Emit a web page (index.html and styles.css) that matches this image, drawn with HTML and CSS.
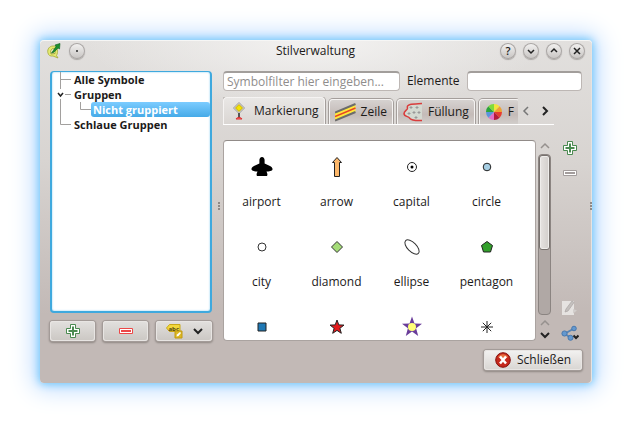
FILE: index.html
```html
<!DOCTYPE html>
<html lang="de">
<head>
<meta charset="utf-8">
<title>Stilverwaltung</title>
<link rel="stylesheet" href="styles.css">
</head>
<body>
<main class="window">
  <header class="titlebar">
    <div class="window-controls">
      <svg class="app-icon" width="16" height="16" viewBox="0 0 16 16"><path d="M7 3C3.500 3 1.200 6 1.800 9.500c.5 3 2.700 4 5.200 3.500l5 2-1.500-2.500C12.500 9 11.500 4 8.500 3z" fill="#e4ea70" stroke="#a4a838" stroke-width=".8"/><path d="M7 5.500C5 6 4.200 8.500 5 11l4-.5 0-4z" fill="#fafad0" stroke="#8f9428" stroke-width=".8"/><path d="M14 .5 9 2l1 1.500L5.500 10 8 9.200 12 5l1.500 1z" fill="#19902e" stroke="#0c5e1a" stroke-width=".6"/></svg>
      <button class="round" aria-label="Menü"><svg width="16" height="16" viewBox="0 0 16 16"><path d="M7 7h2v2H7z" fill="#555"/></svg></button>
    </div>
    <h1 class="title">Stilverwaltung</h1>
    <div class="window-controls end">
      <button class="round">?</button>
      <button class="round"><svg width="16" height="16" viewBox="0 0 16 16"><path class="stroke" d="m5 7 3 3 3-3"/></svg></button>
      <button class="round"><svg width="16" height="16" viewBox="0 0 16 16"><path class="stroke" d="m5 9 3-3 3 3"/></svg></button>
      <button class="round"><svg width="16" height="16" viewBox="0 0 16 16"><path class="stroke" d="m5 5 6 6m0-6-6 6"/></svg></button>
    </div>
  </header>

  <div class="content">
    <section class="groups">
      <ul class="tree">
        <li class="node"><svg width="20" height="15"><path class="branch" d="M8.500 0v15M8.500 7.500H19"/></svg><span class="node-label">Alle Symbole</span></li>
        <li class="node"><svg width="20" height="15"><path class="branch" d="M8.500 0v2M8.500 12v3M13 7.500h6"/><path class="stroke" d="m6 6 2.500 3L11 6"/></svg><span class="node-label">Gruppen</span></li>
        <li class="node"><svg width="39" height="15"><path class="branch" d="M8.500 0v15M28.500 0v7.500H39"/></svg><span class="node-label selected">Nicht gruppiert</span></li>
        <li class="node"><svg width="20" height="15"><path class="branch" d="M8.500 0v7.500H19"/></svg><span class="node-label">Schlaue Gruppen</span></li>
      </ul>
      <div class="group-actions">
        <button class="push"><svg width="14" height="14" viewBox="0 0 14 14"><path d="M4.500.5h5v4h4v5h-4v4h-5v-4h-4v-5h4z" fill="#fff" stroke="#4a8a50"/><path d="M7 2.500v9M2.500 7h9" stroke="#4a8a50" stroke-width="2"/></svg></button>
        <button class="push"><svg width="14" height="6" viewBox="0 0 14 6"><path d="M.5.5h13v5H.5z" fill="#fff" stroke="#ec4848"/><path d="M2 3h10" stroke="#ec4848" stroke-width="2"/></svg></button>
        <button class="push wide">
          <svg width="17" height="16" viewBox="0 0 17 16"><path d="M3.500 1.500h10.500v7H3.500l-3-3.500z" fill="#f2d83c" stroke="#c8a818"/><text class="abc" x="2.500" y="7.500">abc</text><path d="M9 8h7v7H9z" fill="#dcb824" stroke="#c29a10"/><path d="m10.500 13.500.5-2L14 9l1 1-2.500 3z" fill="#fff"/></svg>
          <svg width="10" height="8" viewBox="0 0 10 8"><path class="stroke bold" d="m1 2 4 4 4-4"/></svg>
        </button>
      </div>
    </section>

    <div class="splitter"></div>

    <section class="symbols">
      <div class="filters">
        <input class="field search" type="text" placeholder="Symbolfilter hier eingeben..." aria-label="Symbolfilter">
        <label for="tags">Elemente</label>
        <input class="field tags" id="tags" type="text">
      </div>

      <nav class="tabbar">
        <div class="tabs">
          <button class="tab active"><svg width="20" height="20" viewBox="0 0 20 20"><path d="M10 1.500 15.500 7 10 12.500 4.500 7z" fill="#ddd" stroke="#999"/><path d="m10 3.500 3.500 3.500-3.500 3.500L6.500 7z" fill="#f5e500" stroke="#c6a800"/><path d="M10 12v5" stroke="#555" stroke-width="2"/><path d="M7 18c1-2 5-2 6 0z" fill="#f77" stroke="#d92c2c"/></svg>Markierung</button>
          <button class="tab"><svg width="21" height="20" viewBox="0 0 21 20"><path d="M0 10.500 20.500 2v8L0 18.500z" fill="#ffe83c"/><path d="M0 10.500 20.500 2M0 18.500 20.500 10" stroke="#6c6c6c" stroke-width="2"/><path d="M0 14.500 20.500 6" stroke="#e84424" stroke-width="1.500"/></svg>Zeile</button>
          <button class="tab"><svg width="20" height="20" viewBox="0 0 20 20"><path d="M19 1.500C12 2 3 1.500 4.500 6c.3 2-4 3-3.500 6 .6 2.800 4 1.800 6 4.500C9 19 14 18.500 19 18.500" fill="#d4d9d1" stroke="#d93c3c" stroke-width="1.500"/><path d="M8 4v3M6.500 5.500h3M14 4v3m-1.500-1.500h3M6 10v3m-1.500-1.500h3M11 9v3m-1.500-1.500h3M16 9v3m-1.500-1.500h3M13 14v3m-1.500-1.500h3" stroke="#999"/></svg>Füllung</button>
          <button class="tab"><svg width="18" height="18" viewBox="-9 -9 18 18"><path d="M0 0V-8A8 8 0 0 1 5.700-5.700z" fill="#f2e43c"/><path d="M0 0 5.700-5.700A8 8 0 0 1 8 0z" fill="#f0a030"/><path d="M0 0H8A8 8 0 0 1 5.700 5.700z" fill="#e83c30"/><path d="M0 0 5.700 5.700A8 8 0 0 1 0 8z" fill="#b51a3c"/><path d="M0 0V8A8 8 0 0 1-5.700 5.700z" fill="#e070c8"/><path d="M0 0-5.700 5.700A8 8 0 0 1-8 0z" fill="#5a94dc"/><path d="M0 0H-8A8 8 0 0 1-5.700-5.700z" fill="#2ca43c"/><path d="M0 0-5.700-5.700A8 8 0 0 1 0-8z" fill="#80dc38"/></svg>F</button>
        </div>
        <div class="tab-scroll">
          <button class="flat"><svg width="8" height="10" viewBox="0 0 8 10"><path class="stroke faint" d="M6 1 2 5l4 4"/></svg></button>
          <button class="flat"><svg width="8" height="10" viewBox="0 0 8 10"><path class="stroke bold" d="m2 1 4 4-4 4"/></svg></button>
        </div>
      </nav>

      <div class="browser">
        <ul class="symbol-list">
          <li class="symbol"><svg width="24" height="24" viewBox="0 0 24 24"><path d="M12 2c1.600 0 2.600 1.500 2.600 3v3.500L20 11c2 1 2.600 2 2.500 3.500-.2 1.500-3.500 2-6 2 .5 1.500 1.500 2.500.5 4.500H7c-1-2 0-3 .5-4.500-2.500 0-5.800-.5-6-2C1.400 13 2 12 4 11l5.400-2.500V5C9.400 3.500 10.400 2 12 2z" fill="#000"/></svg>airport</li>
          <li class="symbol"><svg width="24" height="24" viewBox="0 0 24 24"><path d="m12 2.500 4.500 5h-2v14h-5v-14h-2z" fill="#fdb769" stroke="#222"/></svg>arrow</li>
          <li class="symbol"><svg width="24" height="24" viewBox="0 0 24 24"><circle cx="12" cy="12" r="4.500" fill="#fff" stroke="#222"/><circle cx="12" cy="12" r="1.500" fill="#000"/></svg>capital</li>
          <li class="symbol"><svg width="24" height="24" viewBox="0 0 24 24"><circle cx="12" cy="12" r="3.800" fill="#a6cee3" stroke="#222"/></svg>circle</li>
          <li class="symbol"><svg width="24" height="24" viewBox="0 0 24 24"><circle cx="12" cy="12" r="4" fill="#fff" stroke="#333"/></svg>city</li>
          <li class="symbol"><svg width="24" height="24" viewBox="0 0 24 24"><path d="m12 6.500 5.500 5.500-5.500 5.500L6.500 12z" fill="#a5dc78" stroke="#333"/></svg>diamond</li>
          <li class="symbol"><svg width="24" height="24" viewBox="0 0 24 24"><ellipse cx="12" cy="12" rx="9" ry="4.500" transform="rotate(45 12 12)" fill="#fff" stroke="#333"/></svg>ellipse</li>
          <li class="symbol"><svg width="24" height="24" viewBox="0 0 24 24"><path d="m12 6.500 5.500 4-2 6.500h-7l-2-6.500z" fill="#33a02c" stroke="#222"/></svg>pentagon</li>
          <li class="symbol"><svg width="24" height="24" viewBox="0 0 24 24"><path d="M8 8h8v8H8z" fill="#1f78b4" stroke="#222"/></svg></li>
          <li class="symbol"><svg width="24" height="24" viewBox="0 0 24 24"><path d="m12 5 1.800 4.900 5.200.2-4.100 3.200 1.400 5L12 15.400l-4.300 2.900 1.400-5L5 10.100l5.200-.2z" fill="#e31a1c" stroke="#222"/></svg></li>
          <li class="symbol"><svg width="24" height="24" viewBox="0 0 24 24"><path d="m12 1.500 2.500 7 7.500.3-5.900 4.500L18.200 21 12 16.500 5.800 21l2.100-7.700L2 8.800l7.500-.3z" fill="#6a3d9a"/><circle cx="12" cy="12" r="4" fill="#ffff78"/></svg></li>
          <li class="symbol"><svg width="24" height="24" viewBox="0 0 24 24"><path d="M12 6v12M6 12h12M7.800 7.800l8.400 8.400m0-8.400-8.400 8.400" stroke="#222"/></svg></li>
        </ul>
        <div class="scrollbar">
          <button class="flat"><svg width="10" height="8" viewBox="0 0 10 8"><path class="stroke gray" d="m1 6 4-4 4 4"/></svg></button>
          <div class="track"><div class="thumb"></div></div>
          <button class="flat"><svg width="10" height="8" viewBox="0 0 10 8"><path class="stroke gray" d="m1 6 4-4 4 4"/></svg></button>
          <button class="flat"><svg width="10" height="8" viewBox="0 0 10 8"><path class="stroke bold" d="m1 2 4 4 4-4"/></svg></button>
        </div>
        <div class="tools">
          <button class="flat"><svg width="14" height="14" viewBox="0 0 14 14"><path d="M4.500.5h5v4h4v5h-4v4h-5v-4h-4v-5h4z" fill="#fff" stroke="#4a8a50"/><path d="M7 2.500v9M2.500 7h9" stroke="#4a8a50" stroke-width="2"/></svg></button>
          <button class="flat"><svg width="14" height="6" viewBox="0 0 14 6"><path d="M.5.5h13v5H.5z" fill="#fff" stroke="#a39d9c"/><path d="M2 3h10" stroke="#a39d9c" stroke-width="2"/></svg></button>
          <button class="flat push-down"><svg width="18" height="16" viewBox="0 0 18 16"><path d="M1 1h12v14H1z" fill="#e6e3e1"/><path d="m4 12 1-3 6-8 2 1.500L7 11z" fill="#c4c0be" stroke="#aaa5a3" stroke-width=".7"/><path d="m12 9 4 1.500-4 3z" fill="#d2cecc"/></svg></button>
          <button class="flat"><svg width="18" height="16" viewBox="0 0 18 16"><path d="m4 8.500 9-5M4 9l6 4" stroke="#5584b6" stroke-width="2"/><g fill="#6398cf" stroke="#4878ae"><circle cx="13" cy="3.500" r="2.300"/><circle cx="3.500" cy="8.500" r="2.600"/><circle cx="9.500" cy="12.800" r="2.500"/></g><path class="stroke bold" d="m12.500 10.500 2.500 2.500 2.500-2.500"/></svg></button>
        </div>
      </div>
    </section>
    <div class="splitter edge"></div>
  </div>

  <footer class="footer">
    <button class="push close"><svg width="16" height="16" viewBox="0 0 16 16"><circle cx="8" cy="8" r="7.300" fill="#c5281c" stroke="#86100c"/><path d="M3 5a6 6 0 0 1 10 0l-5 3z" fill="#e87040"/><path d="m5 4.500 6 7m0-7-6 7" stroke="#fff" stroke-width="2.500"/></svg>Schließen</button>
  </footer>
</main>
</body>
</html>
```

FILE: styles.css
```css
* { box-sizing: border-box; }

body {
  height: 100vh;
  margin: 0;
  padding: 40px;
  background: #fff;
  color: #1c1a19;
  font: 12px/16px "Open Sans", "Noto Sans", sans-serif;
}

ul { list-style: none; margin: 0; padding: 0; }
svg { display: block; flex: none; fill: none; }
button { font: inherit; color: inherit; padding: 0; border: 0; }

.window {
  display: flex;
  flex-direction: column;
  height: 100%;
  padding: 2px 0 13px 10px;
  border-radius: 4px;
  background:
    radial-gradient(ellipse 230px 70px at 50% 0, #f3f2f1, transparent),
    linear-gradient(#e2e0de, #d8d4d1 35%, #c2b9b6 80%);
  box-shadow: inset 0 1px #f6f6f5, inset -1px 0 #e6e3e1,
    0 0 8px 1px #6cc6fa, 0 0 24px 6px #bcdaff;
}

.titlebar {
  display: grid;
  grid-template-columns: 1fr auto 1fr;
  align-items: center;
  height: 17px;
  margin: 0 7px 12px -4px;
}
.title {
  margin: 0;
  font-size: 12px;
  line-height: 18px;
  font-weight: 400;
}
.window-controls { display: flex; gap: 7px; }
.end { justify-self: end; }
.round {
  display: flex;
  align-items: center;
  justify-content: center;
  width: 16px;
  height: 16px;
  border-radius: 50%;
  background: linear-gradient(#f4f3f2, #c6c3c1);
  box-shadow: inset 0 0 0 1px #aaa6a4, 0 1px 1px #aaa6a4;
  font-size: 11px;
  font-weight: 600;
}

.stroke { stroke: #222; stroke-width: 1.5; }
.bold { stroke-width: 2; }
.faint { stroke: #777; }
.gray { stroke: #96918e; }

.content { display: flex; flex: 1; min-height: 0; }

.groups {
  display: flex;
  flex-direction: column;
  width: 162px;
  gap: 8px;
}
.tree {
  flex: 1;
  border: 2px solid #3fa9de;
  border-top-width: 1px;
  border-radius: 4px;
  background: #fff;
  box-shadow: inset 0 0 2px #7cc8f0;
  font-size: 11px;
  font-weight: 700;
  line-height: 15px;
}
.node { display: flex; height: 15px; white-space: nowrap; }
.branch { stroke: #a2a09e; }
.node-label { flex: 1; padding-left: 2px; }
.selected {
  border-radius: 3px;
  background: linear-gradient(#7cccff, #45aae8);
  color: #fff;
}
.group-actions { display: flex; gap: 8px; }

.push {
  display: flex;
  flex: 1;
  align-items: center;
  justify-content: center;
  height: 20px;
  border-radius: 3px;
  background: linear-gradient(#e2e0de, #cbc7c3);
  box-shadow: inset 0 0 0 1px #e8e5e3, 0 0 0 1px #a39b98, 0 1px 2px 1px #8f8783;
}
.wide { flex: 0 0 56px; gap: 10px; }
.abc { font: bold 6px "Open Sans", sans-serif; fill: #4a4210; }

.splitter {
  align-self: center;
  width: 3px;
  height: 8px;
  margin: 0 2px 0 6px;
  border-left: 2px dotted #8f8986;
}
.edge { width: 2px; margin: 0 0 0 8px; }

.symbols {
  display: flex;
  flex: 1;
  flex-direction: column;
  min-width: 0;
}
.filters { display: flex; align-items: center; gap: 7px; }
.field {
  min-width: 0;
  height: 20px;
  padding: 0 3px;
  border: 1px solid #bdb7b4;
  border-top: 2px solid #a29e9b;
  border-radius: 4px;
  background: #fff;
  font: inherit;
}
.field::placeholder { color: #8f8d8c; }
.search { flex: 11; }
.tags { flex: 7; }

.tabbar {
  display: flex;
  height: 28px;
  margin: 6px 28px 15px 0;
  border-bottom: 1px solid #fff;
}
.tabs { display: flex; flex: 1; align-items: flex-end; gap: 4px; overflow: hidden; }
.tab {
  display: flex;
  flex: none;
  align-items: center;
  gap: 5px;
  height: 25px;
  padding: 0 5px;
  border: 1px solid #f5f3f2;
  border-bottom: 0;
  border-radius: 4px 4px 0 0;
  background: linear-gradient(#d6d2d0, #c4bbb8 60%, #d2cecb);
  box-shadow: 0 0 0 1px #a49e9b;
}
.active {
  height: 27px;
  background: linear-gradient(#e9e7e5, #dad6d3);
}
.tab-scroll { display: flex; gap: 11px; padding: 0 5px 0 4px; }
.flat {
  display: flex;
  flex: none;
  align-items: center;
  justify-content: center;
  background: none;
}

.browser { display: flex; flex: 1; min-height: 0; }
.symbol-list {
  display: grid;
  flex: 1;
  grid-template-columns: repeat(auto-fill, 75px);
  grid-auto-rows: 80px;
  padding-top: 14px;
  overflow: hidden;
  border: 1px solid #aaa3a0;
  border-top-color: #918b88;
  border-radius: 4px;
  background: #fff;
}
.symbol {
  display: flex;
  flex-direction: column;
  align-items: center;
  gap: 15px;
}

.scrollbar {
  display: flex;
  flex-direction: column;
  gap: 4px;
  width: 13px;
  margin: 2px 0 2px 2px;
}
.track {
  flex: 1;
  border: 1px solid #8b8481;
  border-radius: 4px;
  background: #b0a8a5;
}
.thumb {
  height: 60%;
  border: 1px solid #77716e;
  border-radius: 3px;
  background: linear-gradient(90deg, #e6e3e1, #d2cecb);
  box-shadow: inset 0 0 0 1px #efedeb;
}

.tools {
  display: flex;
  flex-direction: column;
  align-items: center;
  gap: 9px;
  width: 20px;
  margin: 0 2px 0 9px;
}
.tools .flat { min-height: 16px; }
.push-down { margin-top: auto; }

.footer { display: flex; justify-content: flex-end; margin: 9px 10px 0 0; }
.close {
  flex: 0 0 98px;
  gap: 6px;
  background: linear-gradient(#f3f2f1, #d8d5d2);
}
```
